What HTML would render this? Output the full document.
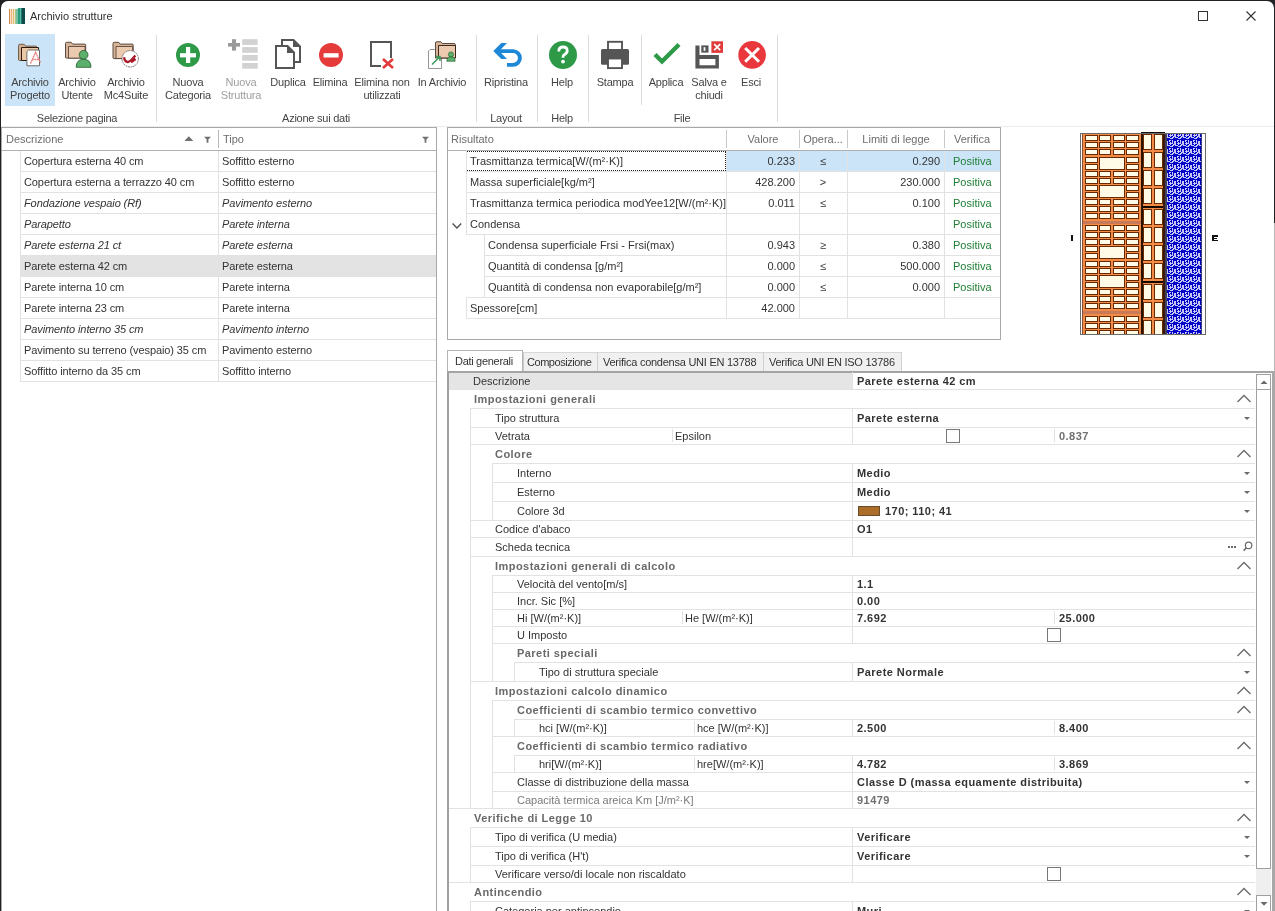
<!DOCTYPE html>
<html><head><meta charset="utf-8"><style>
html,body{margin:0;padding:0;}
body{width:1275px;height:911px;overflow:hidden;position:relative;background:#202124;font-family:"Liberation Sans", sans-serif;}
.a{position:absolute;}
.t{position:absolute;white-space:nowrap;line-height:13px;font-family:"Liberation Sans", sans-serif;-webkit-font-smoothing:antialiased;will-change:transform;}
svg{position:absolute;overflow:visible;}
</style></head><body>
<div class="a" style="left:1px;top:1px;width:1273px;height:920px;background:#fff;border-radius:7px 7px 0 0;"></div><div class="a" style="left:10px;top:9px;width:7.5px;height:15px;background:#f4e4cc;"></div><div class="a" style="left:17.5px;top:8px;width:5px;height:16px;background:#58b8a0;"></div><div class="a" style="left:9px;top:9px;width:1.3px;height:15px;background:#d08850;"></div><div class="a" style="left:11px;top:9px;width:1.3px;height:15px;background:#eeb078;"></div><div class="a" style="left:12.9px;top:9px;width:1.3px;height:15px;background:#dcc070;"></div><div class="a" style="left:14.9px;top:8.5px;width:1.3px;height:15.5px;background:#a8c888;"></div><div class="a" style="left:16.4px;top:8.5px;width:1.2px;height:15.5px;background:#78c0a0;"></div><div class="a" style="left:17.9px;top:8px;width:2.4px;height:16px;background:#2a9a80;"></div><div class="a" style="left:20.6px;top:8px;width:1.4px;height:16px;background:#1a7a70;"></div><div class="a" style="left:22px;top:8px;width:3px;height:16px;background:#0e4a4a;"></div><div class="t" style="top:10px;font-size:11px;color:#303030;left:30px;">Archivio strutture</div><div class="a" style="left:1198px;top:11px;width:10px;height:10px;border:1px solid #333;box-sizing:border-box;"></div><svg style="left:1246px;top:11px" width="10" height="10"><path d="M0.5 0.5L9.5 9.5M9.5 0.5L0.5 9.5" stroke="#333" stroke-width="1.1"/></svg><div class="a" style="left:5px;top:34px;width:50px;height:72px;background:#cce4f7;"></div><div class="t" style="top:76px;font-size:11px;color:#444;letter-spacing:-0.2px;left:-170px;width:400px;text-align:center;">Archivio</div><div class="t" style="top:89px;font-size:11px;color:#444;letter-spacing:-0.2px;left:-170px;width:400px;text-align:center;">Progetto</div><div class="t" style="top:76px;font-size:11px;color:#444;letter-spacing:-0.2px;left:-123px;width:400px;text-align:center;">Archivio</div><div class="t" style="top:89px;font-size:11px;color:#444;letter-spacing:-0.2px;left:-123px;width:400px;text-align:center;">Utente</div><div class="t" style="top:76px;font-size:11px;color:#444;letter-spacing:-0.2px;left:-74px;width:400px;text-align:center;">Archivio</div><div class="t" style="top:89px;font-size:11px;color:#444;letter-spacing:-0.2px;left:-74px;width:400px;text-align:center;">Mc4Suite</div><div class="t" style="top:76px;font-size:11px;color:#444;letter-spacing:-0.2px;left:-12px;width:400px;text-align:center;">Nuova</div><div class="t" style="top:89px;font-size:11px;color:#444;letter-spacing:-0.2px;left:-12px;width:400px;text-align:center;">Categoria</div><div class="t" style="top:76px;font-size:11px;color:#a0a0a0;letter-spacing:-0.2px;left:41px;width:400px;text-align:center;">Nuova</div><div class="t" style="top:89px;font-size:11px;color:#a0a0a0;letter-spacing:-0.2px;left:41px;width:400px;text-align:center;">Struttura</div><div class="t" style="top:76px;font-size:11px;color:#444;letter-spacing:-0.2px;left:88px;width:400px;text-align:center;">Duplica</div><div class="t" style="top:76px;font-size:11px;color:#444;letter-spacing:-0.2px;left:130px;width:400px;text-align:center;">Elimina</div><div class="t" style="top:76px;font-size:11px;color:#444;letter-spacing:-0.2px;left:182px;width:400px;text-align:center;">Elimina non</div><div class="t" style="top:89px;font-size:11px;color:#444;letter-spacing:-0.2px;left:182px;width:400px;text-align:center;">utilizzati</div><div class="t" style="top:76px;font-size:11px;color:#444;letter-spacing:-0.2px;left:242px;width:400px;text-align:center;">In Archivio</div><div class="t" style="top:76px;font-size:11px;color:#444;letter-spacing:-0.2px;left:306px;width:400px;text-align:center;">Ripristina</div><div class="t" style="top:76px;font-size:11px;color:#444;letter-spacing:-0.2px;left:362px;width:400px;text-align:center;">Help</div><div class="t" style="top:76px;font-size:11px;color:#444;letter-spacing:-0.2px;left:415px;width:400px;text-align:center;">Stampa</div><div class="t" style="top:76px;font-size:11px;color:#444;letter-spacing:-0.2px;left:466px;width:400px;text-align:center;">Applica</div><div class="t" style="top:76px;font-size:11px;color:#444;letter-spacing:-0.2px;left:509px;width:400px;text-align:center;">Salva e</div><div class="t" style="top:89px;font-size:11px;color:#444;letter-spacing:-0.2px;left:509px;width:400px;text-align:center;">chiudi</div><div class="t" style="top:76px;font-size:11px;color:#444;letter-spacing:-0.2px;left:551px;width:400px;text-align:center;">Esci</div><div class="t" style="top:112px;font-size:11px;color:#444;letter-spacing:-0.25px;left:-123px;width:400px;text-align:center;">Selezione pagina</div><div class="t" style="top:112px;font-size:11px;color:#444;letter-spacing:-0.25px;left:116px;width:400px;text-align:center;">Azione sui dati</div><div class="t" style="top:112px;font-size:11px;color:#444;letter-spacing:-0.25px;left:306px;width:400px;text-align:center;">Layout</div><div class="t" style="top:112px;font-size:11px;color:#444;letter-spacing:-0.25px;left:362px;width:400px;text-align:center;">Help</div><div class="t" style="top:112px;font-size:11px;color:#444;letter-spacing:-0.25px;left:482px;width:400px;text-align:center;">File</div><div class="a" style="left:156px;top:35px;width:1px;height:87px;background:#dcdcdc;"></div><div class="a" style="left:476px;top:35px;width:1px;height:87px;background:#dcdcdc;"></div><div class="a" style="left:537px;top:35px;width:1px;height:87px;background:#dcdcdc;"></div><div class="a" style="left:588px;top:35px;width:1px;height:87px;background:#dcdcdc;"></div><div class="a" style="left:777px;top:35px;width:1px;height:87px;background:#dcdcdc;"></div><div class="a" style="left:641px;top:35px;width:1px;height:70px;background:#dcdcdc;"></div><div class="a" style="left:1px;top:126px;width:1273px;height:1px;background:#ececec;"></div><div class="a" style="left:1px;top:127px;width:436px;height:784px;border:1px solid #a8a8a8;box-sizing:border-box;border-bottom:none;"></div><svg style="left:0;top:0" width="800" height="130"><path d="M18.5,45.5 q0,-1.2 1.2,-1.2 h4.5 l1.5,1.8 h10 q1,0 1,1 v13.4 h-17.2 q-1,0 -1,-1 z" fill="#cfae92" stroke="#6a5444" stroke-width="0.9"/><path d="M21.5,47.5 h17 v13 h-17 z" fill="#ebc9a6" stroke="#2a1a10" stroke-width="1"/><path d="M28.5,50 h11 v15.8 h-12.6 v-14.2 z" fill="#fff" stroke="#6c6c6c" stroke-width="1"/><path d="M30.5,63.5 L35.5,52.3 L40.5,62.5 M32.3,59.5 h6.3" fill="none" stroke="#ea7a7a" stroke-width="1.4" stroke-dasharray="1.6 0.6"/><path d="M65.5,43.5 q0,-1.2 1.2,-1.2 h4.5 l1.5,1.8 h12 q1,0 1,1 v13 h-19.2 q-1,0 -1,-1 z" fill="#d8b498" stroke="#4a3a30" stroke-width="0.9"/><path d="M68.5,46.5 h16.6 v11.6 h-16.6 z" fill="#ebcab0" stroke="#4a3a30" stroke-width="0.8"/><circle cx="83.6" cy="54.8" r="4.4" fill="#5bb06c" stroke="#1f5a2a" stroke-width="0.8"/><path d="M76.2,67.3 q0,-8 7.4,-8 q7.4,0 7.4,8 z" fill="#5bb06c" stroke="#1f5a2a" stroke-width="0.8"/><path d="M113,43.5 q0,-1.2 1.2,-1.2 h4.5 l1.5,1.8 h12 q1,0 1,1 v13.5 h-19.2 q-1,0 -1,-1 z" fill="#d8b498" stroke="#4a3a30" stroke-width="0.9"/><path d="M116,46.5 h16.6 v12 h-16.6 z" fill="#ebcab0" stroke="#4a3a30" stroke-width="0.8"/><circle cx="130.2" cy="58.8" r="8.2" fill="#fff" stroke="#7a6a6a" stroke-width="0.9" stroke-dasharray="2 0.6"/><path d="M124,57.2 q0.8,4.6 3.8,4.8 q1.8,0.1 7.6,-6.6 M131,62.2 l4.6,-3.2" fill="none" stroke="#a81c2c" stroke-width="2.3"/><circle cx="188" cy="55" r="12" fill="#2e9a48"/><rect x="186" y="47" width="4.2" height="16" fill="#fff"/><rect x="180" y="53.2" width="16" height="4.2" fill="#fff"/><rect x="232" y="39.2" width="4" height="11.4" fill="#9a9a9a"/><rect x="228" y="43" width="12" height="3.6" fill="#9a9a9a"/><rect x="242.2" y="39.2" width="15.5" height="5.7" fill="#d2d2d2"/><rect x="242.2" y="47.1" width="15.5" height="5.7" fill="#d2d2d2"/><rect x="242.2" y="55.0" width="15.5" height="5.7" fill="#d2d2d2"/><rect x="242.2" y="63.0" width="15.5" height="5.7" fill="#d2d2d2"/><path d="M282,40 h11.5 l6.5,6.5 v15.5 h-18 z" fill="#fff" stroke="#555" stroke-width="2"/><path d="M293,40 v7 h7 z" fill="#555"/><path d="M276,46 h11.5 l6.5,6.5 v15.5 h-18 z" fill="#fff" stroke="#555" stroke-width="2"/><path d="M287,46 v7 h7 z" fill="#555"/><circle cx="331" cy="55" r="12" fill="#e53b3b"/><rect x="323.6" y="53.2" width="15" height="4.3" fill="#fff"/><path d="M381,66 h-10 v-24 h20 v16" fill="none" stroke="#555" stroke-width="2"/><path d="M383,59 L393,68 M393,59 L383,68" stroke="#e03a3a" stroke-width="2.6"/><path d="M428.5,51 l1.5,-1.5 h11.5 v19 h-13 z" fill="#fff" stroke="#8a8a8a" stroke-width="0.9"/><path d="M435.5,43 q0,-1.3 1.3,-1.3 h4 l1.5,1.8 h12 q1,0 1,1 v13.5 h-19.8 z" fill="#d8b498" stroke="#4a3a30" stroke-width="0.9"/><path d="M438.5,45.5 h17 v12.5 h-17 z" fill="#ebcab0" stroke="#2a1a10" stroke-width="0.9"/><circle cx="451" cy="54.5" r="2.6" fill="#5bb06c" stroke="#1f5a2a" stroke-width="0.6"/><path d="M446.8,61.3 q0,-4.5 4.2,-4.5 q4.2,0 4.2,4.5 z" fill="#5bb06c" stroke="#1f5a2a" stroke-width="0.6"/><path d="M432,64.5 L440,56.5 M435.5,56.5 h4.5 v4.5" fill="none" stroke="#3a9a58" stroke-width="1.5"/><path d="M501.3,43 h5.7 l-7.8,8.1 l7.8,7.8 h-5.7 l-8,-7.8 z" fill="#1f87d8"/><path d="M498,51.1 h15 a6.9,6.9 0 0 1 0,13.8 h-6" fill="none" stroke="#1f87d8" stroke-width="3.9"/><circle cx="563" cy="55" r="14" fill="#2e9a48"/><path d="M558.8,51.5 q0,-4.5 4.2,-4.5 q4.2,0 4.2,3.8 q0,2.3 -2.6,3.6 q-1.6,0.8 -1.6,2.8 v0.6" fill="none" stroke="#fff" stroke-width="2.8"/><circle cx="563" cy="61.6" r="1.9" fill="#fff"/><rect x="608" y="41.8" width="14" height="9" fill="none" stroke="#555" stroke-width="1.9"/><rect x="601" y="49" width="28" height="15.8" rx="1.5" fill="#555"/><rect x="608" y="58.5" width="14" height="9.6" fill="#fff" stroke="#555" stroke-width="1.9"/><path d="M655,54.5 L662,61.5 L679,44.5" fill="none" stroke="#2e9a48" stroke-width="4.4"/><path d="M695.4,45.4 h4.1 v9.7 h19.4 v13.5 h-23.5 z M699.5,58.9 v6.3 h15.9 v-6.3 z" fill="#555" fill-rule="evenodd"/><rect x="701.3" y="45.4" width="7.2" height="7.2" fill="#555"/><rect x="703.6" y="47.2" width="1.8" height="3.6" fill="#fff"/><rect x="711.4" y="41.3" width="11.6" height="11.6" fill="#e03a3a"/><path d="M714.2,44.1 L720.2,50.1 M720.2,44.1 L714.2,50.1" stroke="#fff" stroke-width="1.7"/><circle cx="752.1" cy="54.9" r="13.8" fill="#e8383d"/><path d="M745.2,48 L759,61.8 M759,48 L745.2,61.8" stroke="#fff" stroke-width="3"/></svg><div class="t" style="top:133px;font-size:11px;color:#6d6d6d;left:6px;">Descrizione</div><div class="t" style="top:133px;font-size:11px;color:#6d6d6d;left:223px;">Tipo</div><div class="a" style="left:218px;top:130px;width:1px;height:18px;background:#b8b8b8;"></div><svg style="left:0;top:0" width="440" height="150"><path d="M184.4,141 L188.85,136.3 L193.3,141 z" fill="#707070"/><path d="M204,136.8 h7 l-2.6,2.8 v3.2 h-1.8 v-3.2 z" fill="#707070"/><path d="M422,136.8 h7 l-2.6,2.8 v3.2 h-1.8 v-3.2 z" fill="#707070"/></svg><div class="a" style="left:2px;top:150px;width:434px;height:1px;background:#b0b0b0;"></div><div class="t" style="top:155px;font-size:11px;color:#333;letter-spacing:-0.1px;left:24px;">Copertura esterna 40 cm</div><div class="t" style="top:155px;font-size:11px;color:#333;letter-spacing:-0.1px;left:222px;">Soffitto esterno</div><div class="a" style="left:20px;top:171px;width:416px;height:1px;background:#e2e2e2;"></div><div class="t" style="top:176px;font-size:11px;color:#333;letter-spacing:-0.1px;left:24px;">Copertura esterna a terrazzo 40 cm</div><div class="t" style="top:176px;font-size:11px;color:#333;letter-spacing:-0.1px;left:222px;">Soffitto esterno</div><div class="a" style="left:20px;top:192px;width:416px;height:1px;background:#e2e2e2;"></div><div class="t" style="top:197px;font-size:11px;color:#333;font-style:italic;letter-spacing:-0.1px;left:24px;">Fondazione vespaio (Rf)</div><div class="t" style="top:197px;font-size:11px;color:#333;font-style:italic;letter-spacing:-0.1px;left:222px;">Pavimento esterno</div><div class="a" style="left:20px;top:213px;width:416px;height:1px;background:#e2e2e2;"></div><div class="t" style="top:218px;font-size:11px;color:#333;font-style:italic;letter-spacing:-0.1px;left:24px;">Parapetto</div><div class="t" style="top:218px;font-size:11px;color:#333;font-style:italic;letter-spacing:-0.1px;left:222px;">Parete interna</div><div class="a" style="left:20px;top:234px;width:416px;height:1px;background:#e2e2e2;"></div><div class="t" style="top:239px;font-size:11px;color:#333;font-style:italic;letter-spacing:-0.1px;left:24px;">Parete esterna 21 ct</div><div class="t" style="top:239px;font-size:11px;color:#333;font-style:italic;letter-spacing:-0.1px;left:222px;">Parete esterna</div><div class="a" style="left:20px;top:255px;width:416px;height:1px;background:#e2e2e2;"></div><div class="a" style="left:21px;top:256px;width:415px;height:20px;background:#e3e3e3;"></div><div class="t" style="top:260px;font-size:11px;color:#333;letter-spacing:-0.1px;left:24px;">Parete esterna 42 cm</div><div class="t" style="top:260px;font-size:11px;color:#333;letter-spacing:-0.1px;left:222px;">Parete esterna</div><div class="a" style="left:20px;top:276px;width:416px;height:1px;background:#e2e2e2;"></div><div class="t" style="top:281px;font-size:11px;color:#333;letter-spacing:-0.1px;left:24px;">Parete interna 10 cm</div><div class="t" style="top:281px;font-size:11px;color:#333;letter-spacing:-0.1px;left:222px;">Parete interna</div><div class="a" style="left:20px;top:297px;width:416px;height:1px;background:#e2e2e2;"></div><div class="t" style="top:302px;font-size:11px;color:#333;letter-spacing:-0.1px;left:24px;">Parete interna 23 cm</div><div class="t" style="top:302px;font-size:11px;color:#333;letter-spacing:-0.1px;left:222px;">Parete interna</div><div class="a" style="left:20px;top:318px;width:416px;height:1px;background:#e2e2e2;"></div><div class="t" style="top:323px;font-size:11px;color:#333;font-style:italic;letter-spacing:-0.1px;left:24px;">Pavimento interno 35 cm</div><div class="t" style="top:323px;font-size:11px;color:#333;font-style:italic;letter-spacing:-0.1px;left:222px;">Pavimento interno</div><div class="a" style="left:20px;top:339px;width:416px;height:1px;background:#e2e2e2;"></div><div class="t" style="top:344px;font-size:11px;color:#333;letter-spacing:-0.1px;left:24px;">Pavimento su terreno (vespaio) 35 cm</div><div class="t" style="top:344px;font-size:11px;color:#333;letter-spacing:-0.1px;left:222px;">Pavimento esterno</div><div class="a" style="left:20px;top:360px;width:416px;height:1px;background:#e2e2e2;"></div><div class="t" style="top:365px;font-size:11px;color:#333;letter-spacing:-0.1px;left:24px;">Soffitto interno da 35 cm</div><div class="t" style="top:365px;font-size:11px;color:#333;letter-spacing:-0.1px;left:222px;">Soffitto interno</div><div class="a" style="left:20px;top:381px;width:416px;height:1px;background:#e2e2e2;"></div><div class="a" style="left:20px;top:151px;width:1px;height:231px;background:#e2e2e2;"></div><div class="a" style="left:218px;top:151px;width:1px;height:231px;background:#e2e2e2;"></div><div class="a" style="left:447px;top:127px;width:554px;height:213px;border:1px solid #a8a8a8;box-sizing:border-box;"></div><div class="a" style="left:448px;top:150px;width:552px;height:1px;background:#b0b0b0;"></div><div class="t" style="top:133px;font-size:11px;color:#6d6d6d;left:451px;">Risultato</div><div class="a" style="left:726px;top:130px;width:1px;height:18px;background:#c8c8c8;"></div><div class="a" style="left:799px;top:130px;width:1px;height:18px;background:#c8c8c8;"></div><div class="a" style="left:847px;top:130px;width:1px;height:18px;background:#c8c8c8;"></div><div class="a" style="left:944px;top:130px;width:1px;height:18px;background:#c8c8c8;"></div><div class="t" style="top:133px;font-size:11px;color:#6d6d6d;left:563px;width:400px;text-align:center;">Valore</div><div class="t" style="top:133px;font-size:11px;color:#6d6d6d;left:623px;width:400px;text-align:center;">Opera...</div><div class="t" style="top:133px;font-size:11px;color:#6d6d6d;left:696px;width:400px;text-align:center;">Limiti di legge</div><div class="t" style="top:133px;font-size:11px;color:#6d6d6d;left:772px;width:400px;text-align:center;">Verifica</div><div class="a" style="left:727px;top:151px;width:273px;height:20px;background:#cce4f7;"></div><div class="a" style="left:466px;top:151px;width:260px;height:20px;box-sizing:border-box;border:1px dotted #222;"></div><div class="t" style="top:155px;font-size:11px;color:#333;left:470px;">Trasmittanza termica[W/(m²·K)]</div><div class="t" style="top:155px;font-size:11px;color:#333;left:395px;width:400px;text-align:right;">0.233</div><div class="t" style="top:155px;font-size:11px;color:#333;left:623px;width:400px;text-align:center;">≤</div><div class="t" style="top:155px;font-size:11px;color:#333;left:540px;width:400px;text-align:right;">0.290</div><div class="t" style="top:155px;font-size:11px;color:#1e7e34;left:953px;">Positiva</div><div class="a" style="left:466px;top:171px;width:534px;height:1px;background:#e2e2e2;"></div><div class="a" style="left:726px;top:151px;width:1px;height:20px;background:#e2e2e2;"></div><div class="a" style="left:799px;top:151px;width:1px;height:20px;background:#e2e2e2;"></div><div class="a" style="left:847px;top:151px;width:1px;height:20px;background:#e2e2e2;"></div><div class="a" style="left:944px;top:151px;width:1px;height:20px;background:#e2e2e2;"></div><div class="t" style="top:176px;font-size:11px;color:#333;left:470px;">Massa superficiale[kg/m²]</div><div class="t" style="top:176px;font-size:11px;color:#333;left:395px;width:400px;text-align:right;">428.200</div><div class="t" style="top:176px;font-size:11px;color:#333;left:623px;width:400px;text-align:center;">&gt;</div><div class="t" style="top:176px;font-size:11px;color:#333;left:540px;width:400px;text-align:right;">230.000</div><div class="t" style="top:176px;font-size:11px;color:#1e7e34;left:953px;">Positiva</div><div class="a" style="left:466px;top:192px;width:534px;height:1px;background:#e2e2e2;"></div><div class="a" style="left:726px;top:172px;width:1px;height:20px;background:#e2e2e2;"></div><div class="a" style="left:799px;top:172px;width:1px;height:20px;background:#e2e2e2;"></div><div class="a" style="left:847px;top:172px;width:1px;height:20px;background:#e2e2e2;"></div><div class="a" style="left:944px;top:172px;width:1px;height:20px;background:#e2e2e2;"></div><div class="t" style="top:197px;font-size:11px;color:#333;left:470px;">Trasmittanza termica periodica modYee12[W/(m²·K)]</div><div class="t" style="top:197px;font-size:11px;color:#333;left:395px;width:400px;text-align:right;">0.011</div><div class="t" style="top:197px;font-size:11px;color:#333;left:623px;width:400px;text-align:center;">≤</div><div class="t" style="top:197px;font-size:11px;color:#333;left:540px;width:400px;text-align:right;">0.100</div><div class="t" style="top:197px;font-size:11px;color:#1e7e34;left:953px;">Positiva</div><div class="a" style="left:466px;top:213px;width:534px;height:1px;background:#e2e2e2;"></div><div class="a" style="left:726px;top:193px;width:1px;height:20px;background:#e2e2e2;"></div><div class="a" style="left:799px;top:193px;width:1px;height:20px;background:#e2e2e2;"></div><div class="a" style="left:847px;top:193px;width:1px;height:20px;background:#e2e2e2;"></div><div class="a" style="left:944px;top:193px;width:1px;height:20px;background:#e2e2e2;"></div><div class="t" style="top:218px;font-size:11px;color:#333;left:470px;">Condensa</div><div class="t" style="top:218px;font-size:11px;color:#333;left:395px;width:400px;text-align:right;"></div><div class="t" style="top:218px;font-size:11px;color:#333;left:623px;width:400px;text-align:center;"></div><div class="t" style="top:218px;font-size:11px;color:#333;left:540px;width:400px;text-align:right;"></div><div class="t" style="top:218px;font-size:11px;color:#1e7e34;left:953px;">Positiva</div><div class="a" style="left:466px;top:234px;width:534px;height:1px;background:#e2e2e2;"></div><div class="a" style="left:726px;top:214px;width:1px;height:20px;background:#e2e2e2;"></div><div class="a" style="left:799px;top:214px;width:1px;height:20px;background:#e2e2e2;"></div><div class="a" style="left:847px;top:214px;width:1px;height:20px;background:#e2e2e2;"></div><div class="a" style="left:944px;top:214px;width:1px;height:20px;background:#e2e2e2;"></div><div class="t" style="top:239px;font-size:11px;color:#333;left:488px;">Condensa superficiale Frsi - Frsi(max)</div><div class="t" style="top:239px;font-size:11px;color:#333;left:395px;width:400px;text-align:right;">0.943</div><div class="t" style="top:239px;font-size:11px;color:#333;left:623px;width:400px;text-align:center;">≥</div><div class="t" style="top:239px;font-size:11px;color:#333;left:540px;width:400px;text-align:right;">0.380</div><div class="t" style="top:239px;font-size:11px;color:#1e7e34;left:953px;">Positiva</div><div class="a" style="left:484px;top:255px;width:516px;height:1px;background:#e2e2e2;"></div><div class="a" style="left:484px;top:234px;width:1px;height:21px;background:#e2e2e2;"></div><div class="a" style="left:726px;top:235px;width:1px;height:20px;background:#e2e2e2;"></div><div class="a" style="left:799px;top:235px;width:1px;height:20px;background:#e2e2e2;"></div><div class="a" style="left:847px;top:235px;width:1px;height:20px;background:#e2e2e2;"></div><div class="a" style="left:944px;top:235px;width:1px;height:20px;background:#e2e2e2;"></div><div class="t" style="top:260px;font-size:11px;color:#333;left:488px;">Quantità di condensa [g/m²]</div><div class="t" style="top:260px;font-size:11px;color:#333;left:395px;width:400px;text-align:right;">0.000</div><div class="t" style="top:260px;font-size:11px;color:#333;left:623px;width:400px;text-align:center;">≤</div><div class="t" style="top:260px;font-size:11px;color:#333;left:540px;width:400px;text-align:right;">500.000</div><div class="t" style="top:260px;font-size:11px;color:#1e7e34;left:953px;">Positiva</div><div class="a" style="left:484px;top:276px;width:516px;height:1px;background:#e2e2e2;"></div><div class="a" style="left:484px;top:255px;width:1px;height:21px;background:#e2e2e2;"></div><div class="a" style="left:726px;top:256px;width:1px;height:20px;background:#e2e2e2;"></div><div class="a" style="left:799px;top:256px;width:1px;height:20px;background:#e2e2e2;"></div><div class="a" style="left:847px;top:256px;width:1px;height:20px;background:#e2e2e2;"></div><div class="a" style="left:944px;top:256px;width:1px;height:20px;background:#e2e2e2;"></div><div class="t" style="top:281px;font-size:11px;color:#333;left:488px;">Quantità di condensa non evaporabile[g/m²]</div><div class="t" style="top:281px;font-size:11px;color:#333;left:395px;width:400px;text-align:right;">0.000</div><div class="t" style="top:281px;font-size:11px;color:#333;left:623px;width:400px;text-align:center;">≤</div><div class="t" style="top:281px;font-size:11px;color:#333;left:540px;width:400px;text-align:right;">0.000</div><div class="t" style="top:281px;font-size:11px;color:#1e7e34;left:953px;">Positiva</div><div class="a" style="left:466px;top:297px;width:534px;height:1px;background:#e2e2e2;"></div><div class="a" style="left:484px;top:276px;width:1px;height:21px;background:#e2e2e2;"></div><div class="a" style="left:726px;top:277px;width:1px;height:20px;background:#e2e2e2;"></div><div class="a" style="left:799px;top:277px;width:1px;height:20px;background:#e2e2e2;"></div><div class="a" style="left:847px;top:277px;width:1px;height:20px;background:#e2e2e2;"></div><div class="a" style="left:944px;top:277px;width:1px;height:20px;background:#e2e2e2;"></div><div class="t" style="top:302px;font-size:11px;color:#333;left:470px;">Spessore[cm]</div><div class="t" style="top:302px;font-size:11px;color:#333;left:395px;width:400px;text-align:right;">42.000</div><div class="t" style="top:302px;font-size:11px;color:#333;left:623px;width:400px;text-align:center;"></div><div class="t" style="top:302px;font-size:11px;color:#333;left:540px;width:400px;text-align:right;"></div><div class="t" style="top:302px;font-size:11px;color:#1e7e34;left:953px;"></div><div class="a" style="left:466px;top:318px;width:534px;height:1px;background:#e2e2e2;"></div><div class="a" style="left:726px;top:298px;width:1px;height:20px;background:#e2e2e2;"></div><div class="a" style="left:799px;top:298px;width:1px;height:20px;background:#e2e2e2;"></div><div class="a" style="left:847px;top:298px;width:1px;height:20px;background:#e2e2e2;"></div><div class="a" style="left:944px;top:298px;width:1px;height:20px;background:#e2e2e2;"></div><div class="a" style="left:466px;top:150px;width:1px;height:21px;background:#e2e2e2;"></div><div class="a" style="left:466px;top:171px;width:1px;height:21px;background:#e2e2e2;"></div><div class="a" style="left:466px;top:192px;width:1px;height:21px;background:#e2e2e2;"></div><div class="a" style="left:466px;top:213px;width:1px;height:21px;background:#e2e2e2;"></div><div class="a" style="left:466px;top:297px;width:1px;height:21px;background:#e2e2e2;"></div><svg style="left:0;top:0" width="470" height="240"><path d="M452.6,223.6 l4.3,4.4 l4.3,-4.4" fill="none" stroke="#505050" stroke-width="1.4"/></svg><svg style="left:0;top:0" width="1275" height="340"><defs><pattern id="ins" x="1166" y="138" width="8" height="8" patternUnits="userSpaceOnUse"><rect width="8" height="8" fill="#0000c8"/><rect x="4" y="0" width="1" height="1" fill="#c8c8ff"/><rect x="5" y="0" width="1" height="1" fill="#c8c8ff"/><rect x="6" y="0" width="1" height="1" fill="#c8c8ff"/><rect x="3" y="2" width="1" height="1" fill="#c8c8ff"/><rect x="4" y="2" width="1" height="1" fill="#c8c8ff"/><rect x="6" y="2" width="1" height="1" fill="#c8c8ff"/><rect x="0" y="3" width="1" height="1" fill="#c8c8ff"/><rect x="1" y="3" width="1" height="1" fill="#c8c8ff"/><rect x="3" y="3" width="1" height="1" fill="#c8c8ff"/><rect x="6" y="3" width="1" height="1" fill="#c8c8ff"/><rect x="0" y="4" width="1" height="1" fill="#c8c8ff"/><rect x="1" y="4" width="1" height="1" fill="#c8c8ff"/><rect x="4" y="4" width="1" height="1" fill="#c8c8ff"/><rect x="6" y="4" width="1" height="1" fill="#c8c8ff"/><rect x="0" y="5" width="1" height="1" fill="#c8c8ff"/><rect x="1" y="5" width="1" height="1" fill="#c8c8ff"/><rect x="3" y="5" width="1" height="1" fill="#c8c8ff"/><rect x="4" y="5" width="1" height="1" fill="#c8c8ff"/><rect x="5" y="5" width="1" height="1" fill="#c8c8ff"/><rect x="6" y="5" width="1" height="1" fill="#c8c8ff"/><rect x="0" y="6" width="1" height="1" fill="#c8c8ff"/><rect x="1" y="6" width="1" height="1" fill="#c8c8ff"/><rect x="4" y="6" width="1" height="1" fill="#c8c8ff"/><rect x="7" y="6" width="1" height="1" fill="#c8c8ff"/><rect x="1" y="7" width="1" height="1" fill="#c8c8ff"/><rect x="2" y="7" width="1" height="1" fill="#c8c8ff"/><rect x="3" y="7" width="1" height="1" fill="#c8c8ff"/><rect x="6" y="7" width="1" height="1" fill="#c8c8ff"/><rect x="7" y="7" width="1" height="1" fill="#c8c8ff"/></pattern></defs><g shape-rendering="crispEdges"><rect x="1080" y="133" width="126" height="202" fill="#fff"/><rect x="1083" y="133" width="58" height="202" fill="#f28a48"/><rect x="1082" y="133" width="1" height="202" fill="#8a5030"/><rect x="1083" y="133" width="58" height="1" fill="#6a4a3a"/><rect x="1083" y="221" width="58" height="3" fill="#c87a58"/><rect x="1083" y="311" width="58" height="3" fill="#c87a58"/><rect x="1085" y="135" width="13" height="6" fill="#6a2a00"/><rect x="1086" y="136" width="11" height="4" fill="#fffbe6"/><rect x="1099" y="135" width="12" height="6" fill="#6a2a00"/><rect x="1100" y="136" width="10" height="4" fill="#fffbe6"/><rect x="1113" y="135" width="12" height="6" fill="#6a2a00"/><rect x="1114" y="136" width="10" height="4" fill="#fffbe6"/><rect x="1126" y="135" width="13" height="6" fill="#6a2a00"/><rect x="1127" y="136" width="11" height="4" fill="#fffbe6"/><rect x="1085" y="142" width="13" height="6" fill="#6a2a00"/><rect x="1086" y="143" width="11" height="4" fill="#fffbe6"/><rect x="1099" y="142" width="12" height="6" fill="#6a2a00"/><rect x="1100" y="143" width="10" height="4" fill="#fffbe6"/><rect x="1113" y="142" width="12" height="6" fill="#6a2a00"/><rect x="1114" y="143" width="10" height="4" fill="#fffbe6"/><rect x="1126" y="142" width="13" height="6" fill="#6a2a00"/><rect x="1127" y="143" width="11" height="4" fill="#fffbe6"/><rect x="1085" y="149" width="13" height="6" fill="#6a2a00"/><rect x="1086" y="150" width="11" height="4" fill="#fffbe6"/><rect x="1099" y="149" width="12" height="6" fill="#6a2a00"/><rect x="1100" y="150" width="10" height="4" fill="#fffbe6"/><rect x="1113" y="149" width="12" height="6" fill="#6a2a00"/><rect x="1114" y="150" width="10" height="4" fill="#fffbe6"/><rect x="1126" y="149" width="13" height="6" fill="#6a2a00"/><rect x="1127" y="150" width="11" height="4" fill="#fffbe6"/><rect x="1085" y="157" width="13" height="6" fill="#6a2a00"/><rect x="1086" y="158" width="11" height="4" fill="#fffbe6"/><rect x="1126" y="157" width="13" height="6" fill="#6a2a00"/><rect x="1127" y="158" width="11" height="4" fill="#fffbe6"/><rect x="1099" y="157" width="26" height="13" fill="#6a2a00"/><rect x="1100" y="158" width="24" height="11" fill="#fffbe6"/><rect x="1085" y="164" width="13" height="6" fill="#6a2a00"/><rect x="1086" y="165" width="11" height="4" fill="#fffbe6"/><rect x="1126" y="164" width="13" height="6" fill="#6a2a00"/><rect x="1127" y="165" width="11" height="4" fill="#fffbe6"/><rect x="1085" y="171" width="13" height="6" fill="#6a2a00"/><rect x="1086" y="172" width="11" height="4" fill="#fffbe6"/><rect x="1099" y="171" width="12" height="6" fill="#6a2a00"/><rect x="1100" y="172" width="10" height="4" fill="#fffbe6"/><rect x="1113" y="171" width="12" height="6" fill="#6a2a00"/><rect x="1114" y="172" width="10" height="4" fill="#fffbe6"/><rect x="1126" y="171" width="13" height="6" fill="#6a2a00"/><rect x="1127" y="172" width="11" height="4" fill="#fffbe6"/><rect x="1085" y="178" width="13" height="6" fill="#6a2a00"/><rect x="1086" y="179" width="11" height="4" fill="#fffbe6"/><rect x="1099" y="178" width="12" height="6" fill="#6a2a00"/><rect x="1100" y="179" width="10" height="4" fill="#fffbe6"/><rect x="1113" y="178" width="12" height="6" fill="#6a2a00"/><rect x="1114" y="179" width="10" height="4" fill="#fffbe6"/><rect x="1126" y="178" width="13" height="6" fill="#6a2a00"/><rect x="1127" y="179" width="11" height="4" fill="#fffbe6"/><rect x="1085" y="185" width="13" height="6" fill="#6a2a00"/><rect x="1086" y="186" width="11" height="4" fill="#fffbe6"/><rect x="1126" y="185" width="13" height="6" fill="#6a2a00"/><rect x="1127" y="186" width="11" height="4" fill="#fffbe6"/><rect x="1099" y="185" width="26" height="13" fill="#6a2a00"/><rect x="1100" y="186" width="24" height="11" fill="#fffbe6"/><rect x="1085" y="192" width="13" height="6" fill="#6a2a00"/><rect x="1086" y="193" width="11" height="4" fill="#fffbe6"/><rect x="1126" y="192" width="13" height="6" fill="#6a2a00"/><rect x="1127" y="193" width="11" height="4" fill="#fffbe6"/><rect x="1085" y="199" width="13" height="6" fill="#6a2a00"/><rect x="1086" y="200" width="11" height="4" fill="#fffbe6"/><rect x="1099" y="199" width="12" height="6" fill="#6a2a00"/><rect x="1100" y="200" width="10" height="4" fill="#fffbe6"/><rect x="1113" y="199" width="12" height="6" fill="#6a2a00"/><rect x="1114" y="200" width="10" height="4" fill="#fffbe6"/><rect x="1126" y="199" width="13" height="6" fill="#6a2a00"/><rect x="1127" y="200" width="11" height="4" fill="#fffbe6"/><rect x="1085" y="206" width="13" height="6" fill="#6a2a00"/><rect x="1086" y="207" width="11" height="4" fill="#fffbe6"/><rect x="1099" y="206" width="12" height="6" fill="#6a2a00"/><rect x="1100" y="207" width="10" height="4" fill="#fffbe6"/><rect x="1113" y="206" width="12" height="6" fill="#6a2a00"/><rect x="1114" y="207" width="10" height="4" fill="#fffbe6"/><rect x="1126" y="206" width="13" height="6" fill="#6a2a00"/><rect x="1127" y="207" width="11" height="4" fill="#fffbe6"/><rect x="1085" y="213" width="13" height="6" fill="#6a2a00"/><rect x="1086" y="214" width="11" height="4" fill="#fffbe6"/><rect x="1099" y="213" width="12" height="6" fill="#6a2a00"/><rect x="1100" y="214" width="10" height="4" fill="#fffbe6"/><rect x="1113" y="213" width="12" height="6" fill="#6a2a00"/><rect x="1114" y="214" width="10" height="4" fill="#fffbe6"/><rect x="1126" y="213" width="13" height="6" fill="#6a2a00"/><rect x="1127" y="214" width="11" height="4" fill="#fffbe6"/><rect x="1085" y="225" width="13" height="6" fill="#6a2a00"/><rect x="1086" y="226" width="11" height="4" fill="#fffbe6"/><rect x="1099" y="225" width="12" height="6" fill="#6a2a00"/><rect x="1100" y="226" width="10" height="4" fill="#fffbe6"/><rect x="1113" y="225" width="12" height="6" fill="#6a2a00"/><rect x="1114" y="226" width="10" height="4" fill="#fffbe6"/><rect x="1126" y="225" width="13" height="6" fill="#6a2a00"/><rect x="1127" y="226" width="11" height="4" fill="#fffbe6"/><rect x="1085" y="232" width="13" height="6" fill="#6a2a00"/><rect x="1086" y="233" width="11" height="4" fill="#fffbe6"/><rect x="1099" y="232" width="12" height="6" fill="#6a2a00"/><rect x="1100" y="233" width="10" height="4" fill="#fffbe6"/><rect x="1113" y="232" width="12" height="6" fill="#6a2a00"/><rect x="1114" y="233" width="10" height="4" fill="#fffbe6"/><rect x="1126" y="232" width="13" height="6" fill="#6a2a00"/><rect x="1127" y="233" width="11" height="4" fill="#fffbe6"/><rect x="1085" y="239" width="13" height="6" fill="#6a2a00"/><rect x="1086" y="240" width="11" height="4" fill="#fffbe6"/><rect x="1099" y="239" width="12" height="6" fill="#6a2a00"/><rect x="1100" y="240" width="10" height="4" fill="#fffbe6"/><rect x="1113" y="239" width="12" height="6" fill="#6a2a00"/><rect x="1114" y="240" width="10" height="4" fill="#fffbe6"/><rect x="1126" y="239" width="13" height="6" fill="#6a2a00"/><rect x="1127" y="240" width="11" height="4" fill="#fffbe6"/><rect x="1085" y="246" width="13" height="6" fill="#6a2a00"/><rect x="1086" y="247" width="11" height="4" fill="#fffbe6"/><rect x="1126" y="246" width="13" height="6" fill="#6a2a00"/><rect x="1127" y="247" width="11" height="4" fill="#fffbe6"/><rect x="1099" y="246" width="26" height="13" fill="#6a2a00"/><rect x="1100" y="247" width="24" height="11" fill="#fffbe6"/><rect x="1085" y="253" width="13" height="6" fill="#6a2a00"/><rect x="1086" y="254" width="11" height="4" fill="#fffbe6"/><rect x="1126" y="253" width="13" height="6" fill="#6a2a00"/><rect x="1127" y="254" width="11" height="4" fill="#fffbe6"/><rect x="1085" y="261" width="13" height="6" fill="#6a2a00"/><rect x="1086" y="262" width="11" height="4" fill="#fffbe6"/><rect x="1099" y="261" width="12" height="6" fill="#6a2a00"/><rect x="1100" y="262" width="10" height="4" fill="#fffbe6"/><rect x="1113" y="261" width="12" height="6" fill="#6a2a00"/><rect x="1114" y="262" width="10" height="4" fill="#fffbe6"/><rect x="1126" y="261" width="13" height="6" fill="#6a2a00"/><rect x="1127" y="262" width="11" height="4" fill="#fffbe6"/><rect x="1085" y="268" width="13" height="6" fill="#6a2a00"/><rect x="1086" y="269" width="11" height="4" fill="#fffbe6"/><rect x="1099" y="268" width="12" height="6" fill="#6a2a00"/><rect x="1100" y="269" width="10" height="4" fill="#fffbe6"/><rect x="1113" y="268" width="12" height="6" fill="#6a2a00"/><rect x="1114" y="269" width="10" height="4" fill="#fffbe6"/><rect x="1126" y="268" width="13" height="6" fill="#6a2a00"/><rect x="1127" y="269" width="11" height="4" fill="#fffbe6"/><rect x="1085" y="275" width="13" height="6" fill="#6a2a00"/><rect x="1086" y="276" width="11" height="4" fill="#fffbe6"/><rect x="1126" y="275" width="13" height="6" fill="#6a2a00"/><rect x="1127" y="276" width="11" height="4" fill="#fffbe6"/><rect x="1099" y="275" width="26" height="13" fill="#6a2a00"/><rect x="1100" y="276" width="24" height="11" fill="#fffbe6"/><rect x="1085" y="282" width="13" height="6" fill="#6a2a00"/><rect x="1086" y="283" width="11" height="4" fill="#fffbe6"/><rect x="1126" y="282" width="13" height="6" fill="#6a2a00"/><rect x="1127" y="283" width="11" height="4" fill="#fffbe6"/><rect x="1085" y="289" width="13" height="6" fill="#6a2a00"/><rect x="1086" y="290" width="11" height="4" fill="#fffbe6"/><rect x="1099" y="289" width="12" height="6" fill="#6a2a00"/><rect x="1100" y="290" width="10" height="4" fill="#fffbe6"/><rect x="1113" y="289" width="12" height="6" fill="#6a2a00"/><rect x="1114" y="290" width="10" height="4" fill="#fffbe6"/><rect x="1126" y="289" width="13" height="6" fill="#6a2a00"/><rect x="1127" y="290" width="11" height="4" fill="#fffbe6"/><rect x="1085" y="296" width="13" height="6" fill="#6a2a00"/><rect x="1086" y="297" width="11" height="4" fill="#fffbe6"/><rect x="1099" y="296" width="12" height="6" fill="#6a2a00"/><rect x="1100" y="297" width="10" height="4" fill="#fffbe6"/><rect x="1113" y="296" width="12" height="6" fill="#6a2a00"/><rect x="1114" y="297" width="10" height="4" fill="#fffbe6"/><rect x="1126" y="296" width="13" height="6" fill="#6a2a00"/><rect x="1127" y="297" width="11" height="4" fill="#fffbe6"/><rect x="1085" y="303" width="13" height="6" fill="#6a2a00"/><rect x="1086" y="304" width="11" height="4" fill="#fffbe6"/><rect x="1099" y="303" width="12" height="6" fill="#6a2a00"/><rect x="1100" y="304" width="10" height="4" fill="#fffbe6"/><rect x="1113" y="303" width="12" height="6" fill="#6a2a00"/><rect x="1114" y="304" width="10" height="4" fill="#fffbe6"/><rect x="1126" y="303" width="13" height="6" fill="#6a2a00"/><rect x="1127" y="304" width="11" height="4" fill="#fffbe6"/><rect x="1085" y="316" width="13" height="6" fill="#6a2a00"/><rect x="1086" y="317" width="11" height="4" fill="#fffbe6"/><rect x="1099" y="316" width="12" height="6" fill="#6a2a00"/><rect x="1100" y="317" width="10" height="4" fill="#fffbe6"/><rect x="1113" y="316" width="12" height="6" fill="#6a2a00"/><rect x="1114" y="317" width="10" height="4" fill="#fffbe6"/><rect x="1126" y="316" width="13" height="6" fill="#6a2a00"/><rect x="1127" y="317" width="11" height="4" fill="#fffbe6"/><rect x="1085" y="323" width="13" height="6" fill="#6a2a00"/><rect x="1086" y="324" width="11" height="4" fill="#fffbe6"/><rect x="1099" y="323" width="12" height="6" fill="#6a2a00"/><rect x="1100" y="324" width="10" height="4" fill="#fffbe6"/><rect x="1113" y="323" width="12" height="6" fill="#6a2a00"/><rect x="1114" y="324" width="10" height="4" fill="#fffbe6"/><rect x="1126" y="323" width="13" height="6" fill="#6a2a00"/><rect x="1127" y="324" width="11" height="4" fill="#fffbe6"/><rect x="1085" y="330" width="13" height="5" fill="#6a2a00"/><rect x="1086" y="331" width="11" height="3" fill="#fffbe6"/><rect x="1099" y="330" width="12" height="5" fill="#6a2a00"/><rect x="1100" y="331" width="10" height="3" fill="#fffbe6"/><rect x="1113" y="330" width="12" height="5" fill="#6a2a00"/><rect x="1114" y="331" width="10" height="3" fill="#fffbe6"/><rect x="1126" y="330" width="13" height="5" fill="#6a2a00"/><rect x="1127" y="331" width="11" height="3" fill="#fffbe6"/><rect x="1141" y="133" width="24" height="202" fill="#f28a48"/><rect x="1143" y="134" width="9" height="16" fill="#6a2a00"/><rect x="1144" y="135" width="7" height="14" fill="#fffbe6"/><rect x="1154" y="134" width="9" height="16" fill="#6a2a00"/><rect x="1155" y="135" width="7" height="14" fill="#fffbe6"/><rect x="1143" y="152" width="9" height="16" fill="#6a2a00"/><rect x="1144" y="153" width="7" height="14" fill="#fffbe6"/><rect x="1154" y="152" width="9" height="16" fill="#6a2a00"/><rect x="1155" y="153" width="7" height="14" fill="#fffbe6"/><rect x="1143" y="170" width="9" height="16" fill="#6a2a00"/><rect x="1144" y="171" width="7" height="14" fill="#fffbe6"/><rect x="1154" y="170" width="9" height="16" fill="#6a2a00"/><rect x="1155" y="171" width="7" height="14" fill="#fffbe6"/><rect x="1143" y="188" width="9" height="16" fill="#6a2a00"/><rect x="1144" y="189" width="7" height="14" fill="#fffbe6"/><rect x="1154" y="188" width="9" height="16" fill="#6a2a00"/><rect x="1155" y="189" width="7" height="14" fill="#fffbe6"/><rect x="1143" y="209" width="9" height="16" fill="#6a2a00"/><rect x="1144" y="210" width="7" height="14" fill="#fffbe6"/><rect x="1154" y="209" width="9" height="16" fill="#6a2a00"/><rect x="1155" y="210" width="7" height="14" fill="#fffbe6"/><rect x="1143" y="227" width="9" height="16" fill="#6a2a00"/><rect x="1144" y="228" width="7" height="14" fill="#fffbe6"/><rect x="1154" y="227" width="9" height="16" fill="#6a2a00"/><rect x="1155" y="228" width="7" height="14" fill="#fffbe6"/><rect x="1143" y="245" width="9" height="16" fill="#6a2a00"/><rect x="1144" y="246" width="7" height="14" fill="#fffbe6"/><rect x="1154" y="245" width="9" height="16" fill="#6a2a00"/><rect x="1155" y="246" width="7" height="14" fill="#fffbe6"/><rect x="1143" y="263" width="9" height="16" fill="#6a2a00"/><rect x="1144" y="264" width="7" height="14" fill="#fffbe6"/><rect x="1154" y="263" width="9" height="16" fill="#6a2a00"/><rect x="1155" y="264" width="7" height="14" fill="#fffbe6"/><rect x="1143" y="284" width="9" height="16" fill="#6a2a00"/><rect x="1144" y="285" width="7" height="14" fill="#fffbe6"/><rect x="1154" y="284" width="9" height="16" fill="#6a2a00"/><rect x="1155" y="285" width="7" height="14" fill="#fffbe6"/><rect x="1143" y="302" width="9" height="16" fill="#6a2a00"/><rect x="1144" y="303" width="7" height="14" fill="#fffbe6"/><rect x="1154" y="302" width="9" height="16" fill="#6a2a00"/><rect x="1155" y="303" width="7" height="14" fill="#fffbe6"/><rect x="1143" y="320" width="9" height="15" fill="#6a2a00"/><rect x="1144" y="321" width="7" height="13" fill="#fffbe6"/><rect x="1154" y="320" width="9" height="15" fill="#6a2a00"/><rect x="1155" y="321" width="7" height="13" fill="#fffbe6"/><rect x="1141" y="206" width="24" height="2" fill="#140800"/><rect x="1141" y="281" width="24" height="2" fill="#140800"/><rect x="1141" y="132" width="24" height="2" fill="#111"/><rect x="1141" y="133" width="2" height="202" fill="#2a1200"/><rect x="1163" y="133" width="2" height="202" fill="#3a1a08"/><rect x="1165" y="133" width="37" height="202" fill="url(#ins)"/><rect x="1165" y="133" width="2" height="202" fill="#404060"/><rect x="1201" y="133" width="1" height="202" fill="#404080"/><rect x="1165" y="133" width="37" height="1" fill="#303030"/><rect x="1080" y="133" width="126" height="1" fill="#6a6a6a"/><rect x="1080" y="334" width="126" height="1" fill="#6a6a6a"/><rect x="1080" y="133" width="1" height="202" fill="#6a6a6a"/><rect x="1205" y="133" width="1" height="202" fill="#6a6a6a"/></g></svg><svg style="left:0;top:0" width="1275" height="340"><g fill="#111" shape-rendering="crispEdges"><rect x="1071" y="235" width="2" height="6"/><rect x="1212" y="235" width="2" height="6"/><rect x="1212" y="235" width="6" height="1.5"/><rect x="1212" y="237.6" width="5" height="1.2"/><rect x="1212" y="239.5" width="6" height="1.5"/></g></svg><div class="a" style="left:523px;top:352px;width:379px;height:20px;background:#f0f0f0;"></div><div class="a" style="left:523px;top:352px;width:1px;height:20px;background:#c8c8c8;"></div><div class="a" style="left:523px;top:352px;width:379px;height:1px;background:#d8d8d8;"></div><div class="a" style="left:597px;top:352px;width:1px;height:20px;background:#d0d0d0;"></div><div class="a" style="left:763px;top:352px;width:1px;height:20px;background:#d0d0d0;"></div><div class="a" style="left:901px;top:352px;width:1px;height:20px;background:#d0d0d0;"></div><div class="a" style="left:447px;top:350px;width:76px;height:23px;background:#fff;border:1px solid #b4b4b4;box-sizing:border-box;border-bottom:none;"></div><div class="t" style="top:355px;font-size:11px;color:#333;letter-spacing:-0.3px;left:455px;">Dati generali</div><div class="t" style="top:356px;font-size:11px;color:#333;letter-spacing:-0.45px;left:527px;">Composizione</div><div class="t" style="top:356px;font-size:11px;color:#333;letter-spacing:-0.25px;left:603px;">Verifica condensa UNI EN 13788</div><div class="t" style="top:356px;font-size:11px;color:#333;letter-spacing:-0.25px;left:769px;">Verifica UNI EN ISO 13786</div><div class="a" style="left:447px;top:371px;width:828px;height:2px;background:#a4a4a4;"></div><div class="a" style="left:447px;top:372px;width:2px;height:539px;background:#a0a0a0;"></div><div class="a" style="left:449px;top:373px;width:403px;height:16px;background:#e5e5e5;"></div><div class="t" style="top:375px;font-size:11px;color:#333;left:473px;">Descrizione</div><div class="a" style="left:852px;top:372px;width:1px;height:17px;background:#e2e2e2;"></div><div class="t" style="top:375px;font-size:11px;color:#333;font-weight:bold;letter-spacing:0.45px;left:857px;">Parete esterna 42 cm</div><div class="a" style="left:449px;top:389px;width:806px;height:1px;background:#e2e2e2;"></div><div class="t" style="top:393px;font-size:11px;color:#696969;font-weight:bold;letter-spacing:0.45px;left:474px;">Impostazioni generali</div><div class="a" style="left:470px;top:408px;width:785px;height:1px;background:#e2e2e2;"></div><div class="a" style="left:470px;top:408px;width:1px;height:19px;background:#e2e2e2;"></div><div class="t" style="top:412px;font-size:11px;color:#333;left:495px;">Tipo struttura</div><div class="a" style="left:852px;top:408px;width:1px;height:19px;background:#e2e2e2;"></div><div class="t" style="top:412px;font-size:11px;color:#333;font-weight:bold;letter-spacing:0.45px;left:857px;">Parete esterna</div><div class="a" style="left:470px;top:427px;width:785px;height:1px;background:#e2e2e2;"></div><div class="a" style="left:470px;top:427px;width:1px;height:17px;background:#e2e2e2;"></div><div class="t" style="top:430px;font-size:11px;color:#333;left:495px;">Vetrata</div><div class="a" style="left:852px;top:427px;width:1px;height:17px;background:#e2e2e2;"></div><div class="a" style="left:672px;top:429px;width:1px;height:13px;background:#e2e2e2;"></div><div class="t" style="top:430px;font-size:11px;color:#333;left:675px;">Epsilon</div><div class="a" style="left:946px;top:429px;width:14px;height:14px;background:#fff;border:1px solid #777;box-sizing:border-box;"></div><div class="a" style="left:1054px;top:429px;width:1px;height:13px;background:#e2e2e2;"></div><div class="t" style="top:430px;font-size:11px;color:#707070;font-weight:bold;letter-spacing:0.45px;left:1059px;">0.837</div><div class="a" style="left:470px;top:444px;width:785px;height:1px;background:#e2e2e2;"></div><div class="a" style="left:470px;top:444px;width:1px;height:19px;background:#e2e2e2;"></div><div class="t" style="top:448px;font-size:11px;color:#696969;font-weight:bold;letter-spacing:0.45px;left:495px;">Colore</div><div class="a" style="left:492px;top:463px;width:763px;height:1px;background:#e2e2e2;"></div><div class="a" style="left:470px;top:463px;width:1px;height:19px;background:#e2e2e2;"></div><div class="a" style="left:492px;top:463px;width:1px;height:19px;background:#e2e2e2;"></div><div class="t" style="top:467px;font-size:11px;color:#333;left:517px;">Interno</div><div class="a" style="left:852px;top:463px;width:1px;height:19px;background:#e2e2e2;"></div><div class="t" style="top:467px;font-size:11px;color:#333;font-weight:bold;letter-spacing:0.45px;left:857px;">Medio</div><div class="a" style="left:492px;top:482px;width:763px;height:1px;background:#e2e2e2;"></div><div class="a" style="left:470px;top:482px;width:1px;height:19px;background:#e2e2e2;"></div><div class="a" style="left:492px;top:482px;width:1px;height:19px;background:#e2e2e2;"></div><div class="t" style="top:486px;font-size:11px;color:#333;left:517px;">Esterno</div><div class="a" style="left:852px;top:482px;width:1px;height:19px;background:#e2e2e2;"></div><div class="t" style="top:486px;font-size:11px;color:#333;font-weight:bold;letter-spacing:0.45px;left:857px;">Medio</div><div class="a" style="left:492px;top:501px;width:763px;height:1px;background:#e2e2e2;"></div><div class="a" style="left:470px;top:501px;width:1px;height:19px;background:#e2e2e2;"></div><div class="a" style="left:492px;top:501px;width:1px;height:19px;background:#e2e2e2;"></div><div class="t" style="top:505px;font-size:11px;color:#333;left:517px;">Colore 3d</div><div class="a" style="left:852px;top:501px;width:1px;height:19px;background:#e2e2e2;"></div><div class="a" style="left:858px;top:506px;width:22px;height:10px;background:#aa6e29;border:1px solid #6a4a2a;box-sizing:border-box;"></div><div class="t" style="top:505px;font-size:11px;color:#333;font-weight:bold;letter-spacing:0.45px;left:885px;">170; 110; 41</div><div class="a" style="left:470px;top:520px;width:785px;height:1px;background:#e2e2e2;"></div><div class="a" style="left:470px;top:520px;width:1px;height:17px;background:#e2e2e2;"></div><div class="t" style="top:523px;font-size:11px;color:#333;left:495px;">Codice d&#x27;abaco</div><div class="a" style="left:852px;top:520px;width:1px;height:17px;background:#e2e2e2;"></div><div class="t" style="top:523px;font-size:11px;color:#333;font-weight:bold;letter-spacing:0.45px;left:857px;">O1</div><div class="a" style="left:470px;top:537px;width:785px;height:1px;background:#e2e2e2;"></div><div class="a" style="left:470px;top:537px;width:1px;height:19px;background:#e2e2e2;"></div><div class="t" style="top:541px;font-size:11px;color:#333;left:495px;">Scheda tecnica</div><div class="a" style="left:852px;top:537px;width:1px;height:19px;background:#e2e2e2;"></div><div class="a" style="left:1228px;top:546px;width:2px;height:2px;background:#6a6a6a;"></div><div class="a" style="left:1231px;top:546px;width:2px;height:2px;background:#6a6a6a;"></div><div class="a" style="left:1234px;top:546px;width:2px;height:2px;background:#6a6a6a;"></div><div class="a" style="left:470px;top:556px;width:785px;height:1px;background:#e2e2e2;"></div><div class="a" style="left:470px;top:556px;width:1px;height:19px;background:#e2e2e2;"></div><div class="t" style="top:560px;font-size:11px;color:#696969;font-weight:bold;letter-spacing:0.45px;left:495px;">Impostazioni generali di calcolo</div><div class="a" style="left:492px;top:575px;width:763px;height:1px;background:#e2e2e2;"></div><div class="a" style="left:470px;top:575px;width:1px;height:17px;background:#e2e2e2;"></div><div class="a" style="left:492px;top:575px;width:1px;height:17px;background:#e2e2e2;"></div><div class="t" style="top:578px;font-size:11px;color:#333;left:517px;">Velocità del vento[m/s]</div><div class="a" style="left:852px;top:575px;width:1px;height:17px;background:#e2e2e2;"></div><div class="t" style="top:578px;font-size:11px;color:#333;font-weight:bold;letter-spacing:0.45px;left:857px;">1.1</div><div class="a" style="left:492px;top:592px;width:763px;height:1px;background:#e2e2e2;"></div><div class="a" style="left:470px;top:592px;width:1px;height:17px;background:#e2e2e2;"></div><div class="a" style="left:492px;top:592px;width:1px;height:17px;background:#e2e2e2;"></div><div class="t" style="top:595px;font-size:11px;color:#333;left:517px;">Incr. Sic [%]</div><div class="a" style="left:852px;top:592px;width:1px;height:17px;background:#e2e2e2;"></div><div class="t" style="top:595px;font-size:11px;color:#333;font-weight:bold;letter-spacing:0.45px;left:857px;">0.00</div><div class="a" style="left:492px;top:609px;width:763px;height:1px;background:#e2e2e2;"></div><div class="a" style="left:470px;top:609px;width:1px;height:17px;background:#e2e2e2;"></div><div class="a" style="left:492px;top:609px;width:1px;height:17px;background:#e2e2e2;"></div><div class="t" style="top:612px;font-size:11px;color:#333;left:517px;">Hi [W/(m²·K)]</div><div class="a" style="left:852px;top:609px;width:1px;height:17px;background:#e2e2e2;"></div><div class="a" style="left:682px;top:611px;width:1px;height:13px;background:#e2e2e2;"></div><div class="t" style="top:612px;font-size:11px;color:#333;left:685px;">He [W/(m²·K)]</div><div class="a" style="left:1054px;top:611px;width:1px;height:13px;background:#e2e2e2;"></div><div class="t" style="top:612px;font-size:11px;color:#333;font-weight:bold;letter-spacing:0.45px;left:857px;">7.692</div><div class="t" style="top:612px;font-size:11px;color:#333;font-weight:bold;letter-spacing:0.45px;left:1059px;">25.000</div><div class="a" style="left:492px;top:626px;width:763px;height:1px;background:#e2e2e2;"></div><div class="a" style="left:470px;top:626px;width:1px;height:17px;background:#e2e2e2;"></div><div class="a" style="left:492px;top:626px;width:1px;height:17px;background:#e2e2e2;"></div><div class="t" style="top:629px;font-size:11px;color:#333;left:517px;">U Imposto</div><div class="a" style="left:852px;top:626px;width:1px;height:17px;background:#e2e2e2;"></div><div class="a" style="left:1047px;top:628px;width:14px;height:14px;background:#fff;border:1px solid #777;box-sizing:border-box;"></div><div class="a" style="left:492px;top:643px;width:763px;height:1px;background:#e2e2e2;"></div><div class="a" style="left:470px;top:643px;width:1px;height:19px;background:#e2e2e2;"></div><div class="a" style="left:492px;top:643px;width:1px;height:19px;background:#e2e2e2;"></div><div class="t" style="top:647px;font-size:11px;color:#696969;font-weight:bold;letter-spacing:0.45px;left:517px;">Pareti speciali</div><div class="a" style="left:514px;top:662px;width:741px;height:1px;background:#e2e2e2;"></div><div class="a" style="left:470px;top:662px;width:1px;height:19px;background:#e2e2e2;"></div><div class="a" style="left:492px;top:662px;width:1px;height:19px;background:#e2e2e2;"></div><div class="a" style="left:514px;top:662px;width:1px;height:19px;background:#e2e2e2;"></div><div class="t" style="top:666px;font-size:11px;color:#333;left:539px;">Tipo di struttura speciale</div><div class="a" style="left:852px;top:662px;width:1px;height:19px;background:#e2e2e2;"></div><div class="t" style="top:666px;font-size:11px;color:#333;font-weight:bold;letter-spacing:0.45px;left:857px;">Parete Normale</div><div class="a" style="left:470px;top:681px;width:785px;height:1px;background:#e2e2e2;"></div><div class="a" style="left:470px;top:681px;width:1px;height:19px;background:#e2e2e2;"></div><div class="t" style="top:685px;font-size:11px;color:#696969;font-weight:bold;letter-spacing:0.45px;left:495px;">Impostazioni calcolo dinamico</div><div class="a" style="left:492px;top:700px;width:763px;height:1px;background:#e2e2e2;"></div><div class="a" style="left:470px;top:700px;width:1px;height:19px;background:#e2e2e2;"></div><div class="a" style="left:492px;top:700px;width:1px;height:19px;background:#e2e2e2;"></div><div class="t" style="top:704px;font-size:11px;color:#696969;font-weight:bold;letter-spacing:0.45px;left:517px;">Coefficienti di scambio termico convettivo</div><div class="a" style="left:514px;top:719px;width:741px;height:1px;background:#e2e2e2;"></div><div class="a" style="left:470px;top:719px;width:1px;height:17px;background:#e2e2e2;"></div><div class="a" style="left:492px;top:719px;width:1px;height:17px;background:#e2e2e2;"></div><div class="a" style="left:514px;top:719px;width:1px;height:17px;background:#e2e2e2;"></div><div class="t" style="top:722px;font-size:11px;color:#333;left:539px;">hci [W/(m²·K)]</div><div class="a" style="left:852px;top:719px;width:1px;height:17px;background:#e2e2e2;"></div><div class="a" style="left:694px;top:721px;width:1px;height:13px;background:#e2e2e2;"></div><div class="t" style="top:722px;font-size:11px;color:#333;left:697px;">hce [W/(m²·K)]</div><div class="a" style="left:1054px;top:721px;width:1px;height:13px;background:#e2e2e2;"></div><div class="t" style="top:722px;font-size:11px;color:#333;font-weight:bold;letter-spacing:0.45px;left:857px;">2.500</div><div class="t" style="top:722px;font-size:11px;color:#333;font-weight:bold;letter-spacing:0.45px;left:1059px;">8.400</div><div class="a" style="left:492px;top:736px;width:763px;height:1px;background:#e2e2e2;"></div><div class="a" style="left:470px;top:736px;width:1px;height:19px;background:#e2e2e2;"></div><div class="a" style="left:492px;top:736px;width:1px;height:19px;background:#e2e2e2;"></div><div class="t" style="top:740px;font-size:11px;color:#696969;font-weight:bold;letter-spacing:0.45px;left:517px;">Coefficienti di scambio termico radiativo</div><div class="a" style="left:514px;top:755px;width:741px;height:1px;background:#e2e2e2;"></div><div class="a" style="left:470px;top:755px;width:1px;height:17px;background:#e2e2e2;"></div><div class="a" style="left:492px;top:755px;width:1px;height:17px;background:#e2e2e2;"></div><div class="a" style="left:514px;top:755px;width:1px;height:17px;background:#e2e2e2;"></div><div class="t" style="top:758px;font-size:11px;color:#333;left:539px;">hri[W/(m²·K)]</div><div class="a" style="left:852px;top:755px;width:1px;height:17px;background:#e2e2e2;"></div><div class="a" style="left:694px;top:757px;width:1px;height:13px;background:#e2e2e2;"></div><div class="t" style="top:758px;font-size:11px;color:#333;left:697px;">hre[W/(m²·K)]</div><div class="a" style="left:1054px;top:757px;width:1px;height:13px;background:#e2e2e2;"></div><div class="t" style="top:758px;font-size:11px;color:#333;font-weight:bold;letter-spacing:0.45px;left:857px;">4.782</div><div class="t" style="top:758px;font-size:11px;color:#333;font-weight:bold;letter-spacing:0.45px;left:1059px;">3.869</div><div class="a" style="left:492px;top:772px;width:763px;height:1px;background:#e2e2e2;"></div><div class="a" style="left:470px;top:772px;width:1px;height:19px;background:#e2e2e2;"></div><div class="a" style="left:492px;top:772px;width:1px;height:19px;background:#e2e2e2;"></div><div class="t" style="top:776px;font-size:11px;color:#333;left:517px;">Classe di distribuzione della massa</div><div class="a" style="left:852px;top:772px;width:1px;height:19px;background:#e2e2e2;"></div><div class="t" style="top:776px;font-size:11px;color:#333;font-weight:bold;letter-spacing:0.45px;left:857px;">Classe D (massa equamente distribuita)</div><div class="a" style="left:492px;top:791px;width:763px;height:1px;background:#e2e2e2;"></div><div class="a" style="left:470px;top:791px;width:1px;height:17px;background:#e2e2e2;"></div><div class="a" style="left:492px;top:791px;width:1px;height:17px;background:#e2e2e2;"></div><div class="t" style="top:794px;font-size:11px;color:#7a7a7a;left:517px;">Capacità termica areica Km [J/m²·K]</div><div class="a" style="left:852px;top:791px;width:1px;height:17px;background:#e2e2e2;"></div><div class="t" style="top:794px;font-size:11px;color:#707070;font-weight:bold;letter-spacing:0.45px;left:857px;">91479</div><div class="a" style="left:449px;top:808px;width:806px;height:1px;background:#e2e2e2;"></div><div class="t" style="top:812px;font-size:11px;color:#696969;font-weight:bold;letter-spacing:0.45px;left:474px;">Verifiche di Legge 10</div><div class="a" style="left:470px;top:827px;width:785px;height:1px;background:#e2e2e2;"></div><div class="a" style="left:470px;top:827px;width:1px;height:19px;background:#e2e2e2;"></div><div class="t" style="top:831px;font-size:11px;color:#333;left:495px;">Tipo di verifica (U media)</div><div class="a" style="left:852px;top:827px;width:1px;height:19px;background:#e2e2e2;"></div><div class="t" style="top:831px;font-size:11px;color:#333;font-weight:bold;letter-spacing:0.45px;left:857px;">Verificare</div><div class="a" style="left:470px;top:846px;width:785px;height:1px;background:#e2e2e2;"></div><div class="a" style="left:470px;top:846px;width:1px;height:19px;background:#e2e2e2;"></div><div class="t" style="top:850px;font-size:11px;color:#333;left:495px;">Tipo di verifica (H&#x27;t)</div><div class="a" style="left:852px;top:846px;width:1px;height:19px;background:#e2e2e2;"></div><div class="t" style="top:850px;font-size:11px;color:#333;font-weight:bold;letter-spacing:0.45px;left:857px;">Verificare</div><div class="a" style="left:470px;top:865px;width:785px;height:1px;background:#e2e2e2;"></div><div class="a" style="left:470px;top:865px;width:1px;height:17px;background:#e2e2e2;"></div><div class="t" style="top:868px;font-size:11px;color:#333;left:495px;">Verificare verso/di locale non riscaldato</div><div class="a" style="left:852px;top:865px;width:1px;height:17px;background:#e2e2e2;"></div><div class="a" style="left:1047px;top:867px;width:14px;height:14px;background:#fff;border:1px solid #777;box-sizing:border-box;"></div><div class="a" style="left:449px;top:882px;width:806px;height:1px;background:#e2e2e2;"></div><div class="t" style="top:886px;font-size:11px;color:#696969;font-weight:bold;letter-spacing:0.45px;left:474px;">Antincendio</div><div class="a" style="left:470px;top:901px;width:785px;height:1px;background:#e2e2e2;"></div><div class="a" style="left:470px;top:901px;width:1px;height:19px;background:#e2e2e2;"></div><div class="t" style="top:905px;font-size:11px;color:#333;left:495px;">Categoria per antincendio</div><div class="a" style="left:852px;top:901px;width:1px;height:19px;background:#e2e2e2;"></div><div class="t" style="top:905px;font-size:11px;color:#333;font-weight:bold;letter-spacing:0.45px;left:857px;">Muri</div><svg style="left:0;top:0" width="1275" height="911"><path d="M1237.5,402 l6.5,-6.5 l6.5,6.5" fill="none" stroke="#6a6a6a" stroke-width="1.3"/><path d="M1244,417 h6 l-3,3 z" fill="#6a6a6a"/><path d="M1237.5,457 l6.5,-6.5 l6.5,6.5" fill="none" stroke="#6a6a6a" stroke-width="1.3"/><path d="M1244,472 h6 l-3,3 z" fill="#6a6a6a"/><path d="M1244,491 h6 l-3,3 z" fill="#6a6a6a"/><path d="M1244,510 h6 l-3,3 z" fill="#6a6a6a"/><circle cx="1248.6" cy="545.4" r="3.2" fill="none" stroke="#6a6a6a" stroke-width="1.2"/><path d="M1246.4,547.8 l-2.8,2.8" stroke="#6a6a6a" stroke-width="1.5"/><path d="M1237.5,569 l6.5,-6.5 l6.5,6.5" fill="none" stroke="#6a6a6a" stroke-width="1.3"/><path d="M1237.5,656 l6.5,-6.5 l6.5,6.5" fill="none" stroke="#6a6a6a" stroke-width="1.3"/><path d="M1244,671 h6 l-3,3 z" fill="#6a6a6a"/><path d="M1237.5,694 l6.5,-6.5 l6.5,6.5" fill="none" stroke="#6a6a6a" stroke-width="1.3"/><path d="M1237.5,713 l6.5,-6.5 l6.5,6.5" fill="none" stroke="#6a6a6a" stroke-width="1.3"/><path d="M1237.5,749 l6.5,-6.5 l6.5,6.5" fill="none" stroke="#6a6a6a" stroke-width="1.3"/><path d="M1244,781 h6 l-3,3 z" fill="#6a6a6a"/><path d="M1237.5,821 l6.5,-6.5 l6.5,6.5" fill="none" stroke="#6a6a6a" stroke-width="1.3"/><path d="M1244,836 h6 l-3,3 z" fill="#6a6a6a"/><path d="M1244,855 h6 l-3,3 z" fill="#6a6a6a"/><path d="M1237.5,895 l6.5,-6.5 l6.5,6.5" fill="none" stroke="#6a6a6a" stroke-width="1.3"/><path d="M1244,910 h6 l-3,3 z" fill="#6a6a6a"/></svg><div class="a" style="left:1256px;top:374px;width:15px;height:537px;background:#efefef;"></div><div class="a" style="left:1256px;top:374px;width:15px;height:16px;background:#fff;border:1px solid #a0a0a0;box-sizing:border-box;"></div><div class="a" style="left:1256px;top:389px;width:15px;height:480px;background:#fff;border:1px solid #a0a0a0;box-sizing:border-box;"></div><div class="a" style="left:1256px;top:895px;width:15px;height:17px;background:#fff;border:1px solid #a0a0a0;box-sizing:border-box;"></div><svg style="left:0;top:0" width="1275" height="911"><path d="M1260.5,384 h7 l-3.5,-3.5 z" fill="#6a6a6a"/><path d="M1260.5,902 h7 l-3.5,3.8 z" fill="#6a6a6a"/></svg><div class="a" style="left:1272px;top:372px;width:3px;height:539px;background:#a8a8a8;"></div><div class="a" style="left:1274px;top:223px;width:1px;height:149px;background:#b8b8b8;"></div>
</body></html>
